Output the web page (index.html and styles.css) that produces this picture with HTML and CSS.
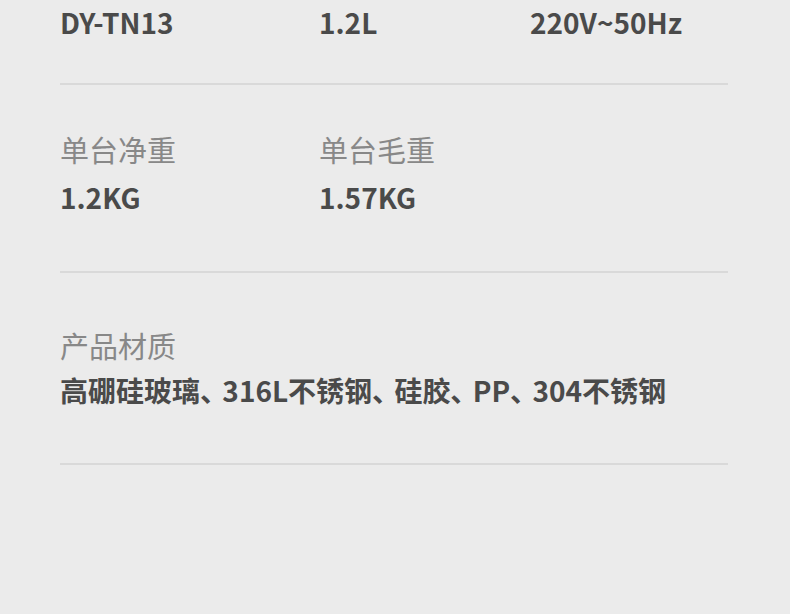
FILE: index.html
```html
<!DOCTYPE html>
<html lang="zh-CN">
<head>
    <meta charset="UTF-8">
    <meta name="viewport" content="width=device-width, initial-scale=1.0">
    <title>产品参数</title>
    <link rel="stylesheet" href="styles.css">
</head>
<body>
    <div class="specs">
        <!-- 型号 / 容量 / 电压 -->
        <div class="spec-row spec-row--top">
            <div class="spec">
                <div class="spec-value">DY-TN13</div>
            </div>
            <div class="spec">
                <div class="spec-value">1.2L</div>
            </div>
            <div class="spec">
                <div class="spec-value">220V~50Hz</div>
            </div>
        </div>

        <!-- 重量 -->
        <div class="spec-row spec-row--weight">
            <div class="spec">
                <div class="spec-label">单台净重</div>
                <div class="spec-value">1.2KG</div>
            </div>
            <div class="spec">
                <div class="spec-label">单台毛重</div>
                <div class="spec-value">1.57KG</div>
            </div>
        </div>

        <!-- 材质 -->
        <div class="spec-row spec-row--wide">
            <div class="spec">
                <div class="spec-label">产品材质</div>
                <div class="spec-value">高硼硅玻璃、 316L不锈钢、 硅胶、 PP、 304不锈钢</div>
            </div>
        </div>
    </div>
</body>
</html>
```

FILE: styles.css
```css
body {
    margin: 0;
    background: #EBEBEB;
    font-family: "Noto Sans CJK SC", "Noto Sans", sans-serif;
    color: #4A4A4A;
}

.specs {
    padding: 0 62px 0 60px;
}

.spec-row {
    display: grid;
    grid-template-columns: 259px 211px 1fr;
    border-bottom: 2px solid #D9D9D9;
}

.spec-row--top {
    padding: 2px 0 41px;
}

.spec-row--weight {
    padding: 44px 0 54px;
}

.spec-row--weight .spec-value {
    margin-top: 8px;
}

.spec-row--wide {
    grid-template-columns: 1fr;
    padding: 52px 0 53px;
}

.spec-row--wide .spec-value {
    margin-top: 5px;
}

.spec-label {
    font-size: 29px;
    line-height: 40px;
    color: #888888;
}

.spec-value {
    font-size: 28px;
    line-height: 40px;
    font-weight: 700;
    color: #4A4A4A;
    font-feature-settings: "palt";
    word-spacing: 2px;
}
```
